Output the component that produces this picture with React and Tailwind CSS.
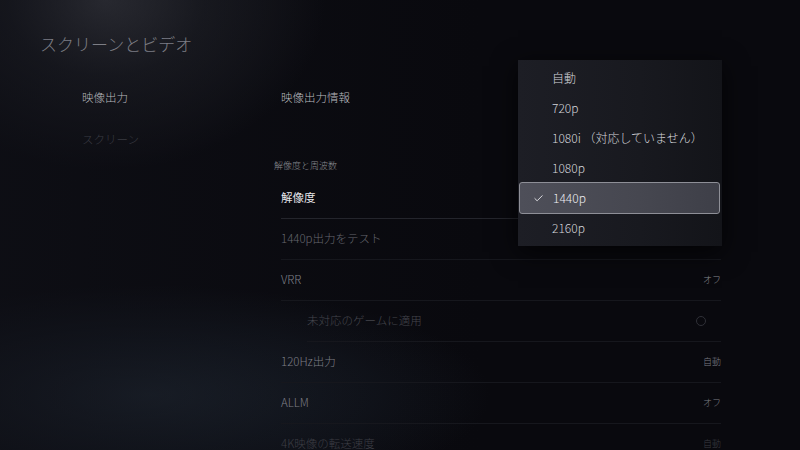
import { Check } from "lucide-react";

const rows = [
  { label: "解像度", tone: "text-[#e6e6ea] font-normal", line: "border-[#24252c]" },
  { label: "1440p出力をテスト", tone: "text-[#65666e]" },
  { label: "VRR", tone: "text-[#80818a]", value: "オフ", valueTone: "text-[#8a8b92]" },
  { label: "未対応のゲームに適用", tone: "text-[#44454c]", indent: true, radio: true },
  { label: "120Hz出力", tone: "text-[#7c7d85]", value: "自動", valueTone: "text-[#7c7d85]" },
  { label: "ALLM", tone: "text-[#7c7d85]", value: "オフ", valueTone: "text-[#7c7d85]" },
  { label: "4K映像の転送速度", tone: "text-[#3c3d44]", value: "自動", valueTone: "text-[#3a3b42]", last: true },
];

const options = ["自動", "720p", "1080i （対応していません）", "1080p", "1440p", "2160p"];

function SettingRow({ row }) {
  return (
    <div
      className={`h-[41px] flex items-center justify-between border-b ${
        row.last ? "border-transparent" : row.line || "border-[#16171d]"
      } ${row.indent ? "ml-[26px]" : ""}`}
    >
      <span className={`text-[11.5px] font-light ${row.tone}`}>{row.label}</span>
      {row.value && <span className={`text-[9px] font-light ${row.valueTone}`}>{row.value}</span>}
      {row.radio && <span className="w-[10px] h-[10px] rounded-full border border-[#2f3037] mr-[15px]" />}
    </div>
  );
}

export default function App() {
  return (
    <div className="w-[800px] h-[450px] relative overflow-hidden bg-[#09090e] font-['Noto_Sans_CJK_JP','Noto_Sans',sans-serif]">
      {/* background glows */}
      <div className="absolute inset-0 bg-[radial-gradient(ellipse_220px_170px_at_105px_0px,#3c3d44_0%,#1b1c22_45%,transparent_100%)]" />
      <div className="absolute inset-0 bg-[radial-gradient(ellipse_340px_110px_at_150px_395px,#1c232d_0%,#12161e_50%,transparent_100%)]" />
      <div className="absolute inset-0 bg-[linear-gradient(90deg,rgba(16,17,24,0.6)_0%,transparent_60%)]" />

      <div className="relative pt-[32px]">
        <div className="pl-[40px] h-[24px] leading-[24px] text-[17px] font-light text-[#7d7e85]">
          スクリーンとビデオ
        </div>

        <div className="flex mt-[21px]">
          <div className="w-[281px] pl-[82px]">
            <div className="h-[42px] flex items-center text-[11.5px] font-light text-[#b4b5ba]">映像出力</div>
            <div className="h-[42px] flex items-center text-[11.5px] font-light text-[#393a42]">スクリーン</div>
          </div>

          <div className="w-[440px]">
            <div className="h-[42px] flex items-center text-[11.5px] font-light text-[#b8b9be]">映像出力情報</div>
            <div className="h-[59px] flex items-end pb-[6px] -ml-[7px]">
              <span className="text-[9px] leading-[12px] font-light text-[#8a8b92]">解像度と周波数</span>
            </div>
            {rows.map((row) => (
              <SettingRow key={row.label} row={row} />
            ))}
          </div>
        </div>
      </div>

      {/* dropdown */}
      <div className="absolute left-[518px] top-[60px] w-[204px] h-[186px] py-[3px] bg-[linear-gradient(90deg,#1d1e25_0%,#18191f_60%,#131419_100%)] shadow-[0_6px_24px_rgba(0,0,0,0.7)]">
        {options.map((opt) => {
          const selected = opt === "1440p";
          return (
            <div
              key={opt}
              className={
                selected
                  ? "h-[32px] -my-[1px] ml-[1px] mr-[2px] flex items-center rounded-[3px] border border-[#8e8f97] bg-[linear-gradient(90deg,#4e4f59_0%,#464750_60%,#3e3f48_100%)]"
                  : "h-[30px] flex items-center"
              }
            >
              <span className={`${selected ? "w-[33px]" : "w-[34px]"} flex justify-center pl-[3px]`}>
                {selected && <Check size={11} strokeWidth={2} className="text-[#e8e8ec]" />}
              </span>
              <span className={`text-[12px] font-light ${selected ? "text-[#eeeef2]" : "text-[#d4d5da]"}`}>{opt}</span>
            </div>
          );
        })}
      </div>
    </div>
  );
}
